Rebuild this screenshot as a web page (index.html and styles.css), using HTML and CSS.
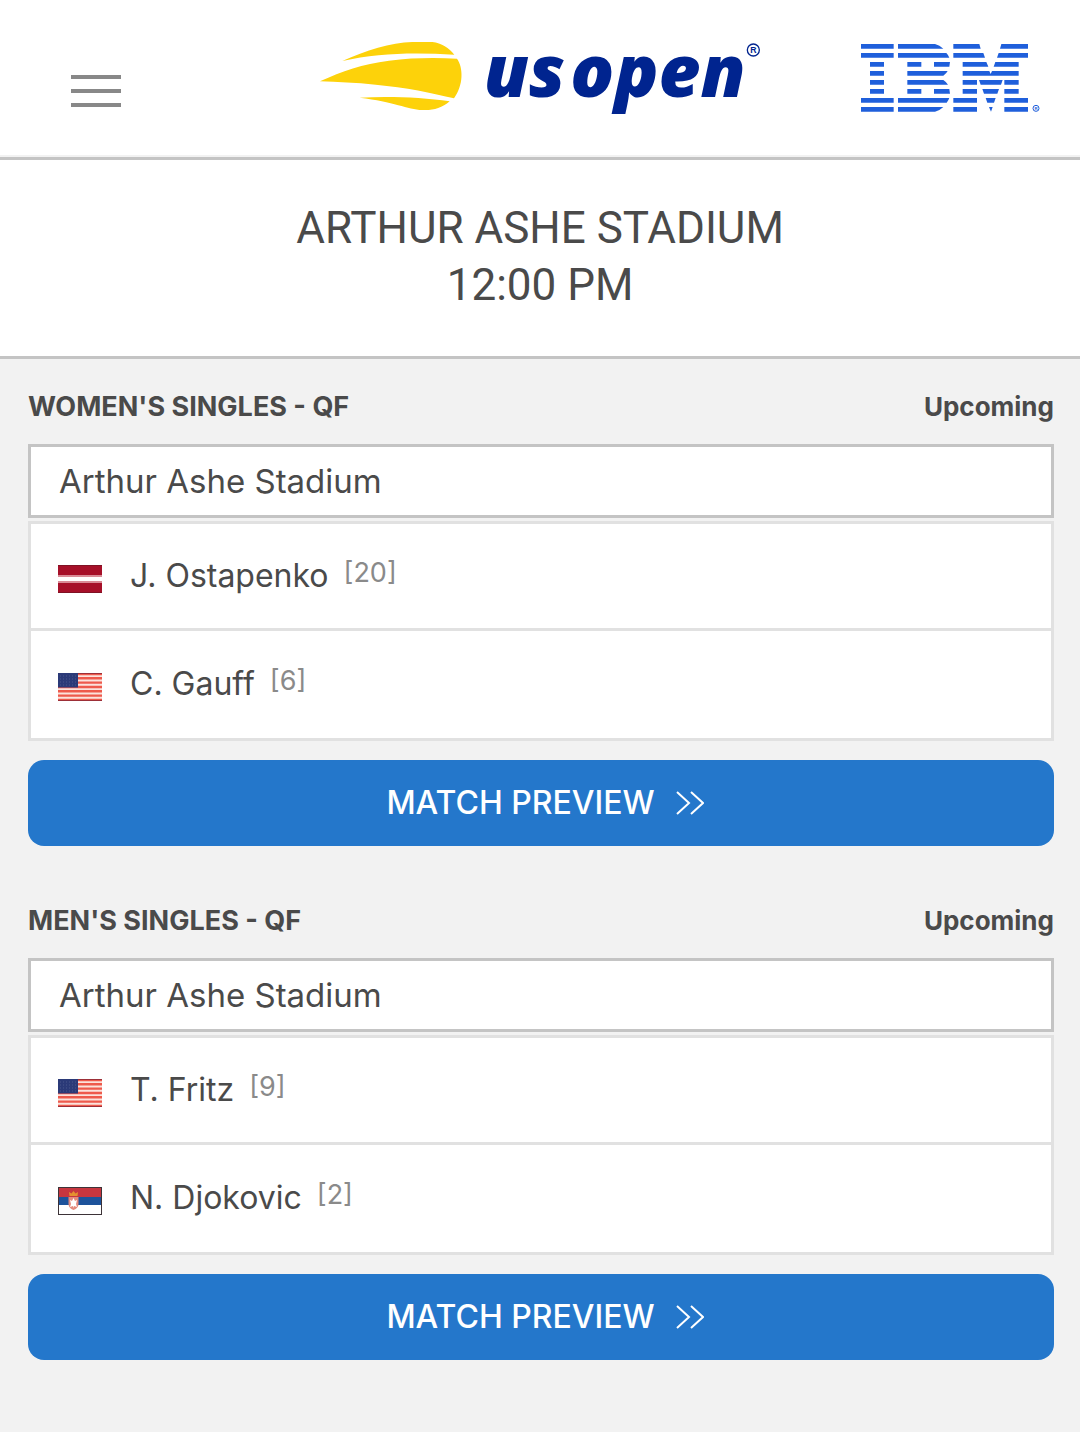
FILE: index.html
```
<!DOCTYPE html>
<html lang="en">
<head>
    <meta charset="UTF-8">
    <meta name="viewport" content="width=device-width, initial-scale=1.0">
    <title>US Open - Schedule</title>
    <link rel="stylesheet" href="styles.css">
</head>
<body>
    <!-- shared flags and icons -->
    <svg class="sprite" aria-hidden="true">
        <symbol id="flag-lat" viewBox="0 0 44 28">
            <rect width="44" height="28" fill="#a61029"/>
            <rect y="10" width="44" height="8" fill="#d98b96"/>
            <rect y="12" width="44" height="4" fill="#fff"/>
            <path d="M0 .5h44M0 27.5h44" stroke="#7f1224"/>
        </symbol>
        <symbol id="flag-usa" viewBox="0 0 44 28">
            <rect width="44" height="28" fill="#fbe3dc"/>
            <path d="M0 1h44M0 5.3h44M0 9.6h44M0 14h44M0 18.3h44M0 22.6h44M0 27h44" stroke="#ee5a4c" stroke-width="2.4"/>
            <path d="M0 .5h44M0 27.5h44" stroke="#9c2f38"/>
            <rect width="20" height="14.500" fill="#2b3a78"/>
            <path d="M2 3h17M2 6h17M2 9h17M2 12h17" stroke="#4a568c" stroke-dasharray="1 2"/>
        </symbol>
        <symbol id="flag-srb" viewBox="0 0 44 28">
            <rect width="44" height="28" fill="#fff"/>
            <rect width="44" height="10" fill="#c7363f"/>
            <rect y="10" width="44" height="8" fill="#1d539b"/>
            <path d="M10.500 10h10v7q0 4-5 6q-5-2-5-6z" fill="#e58a7c"/>
            <path d="M15.500 11l1.500 3 2-1-1 4 1 3-3-1-.5 2-.5-2-3 1 1-3-1-4 2 1z" fill="#fff"/>
            <path d="M11.500 9l-.5-4 2.500 1.500 2-2.500 2 2.500 2.500-1.500-.5 4z" fill="#e5912f"/>
            <rect x=".5" y=".5" width="43" height="27" fill="none" stroke="#3d3338"/>
        </symbol>
        <symbol id="chevrons" viewBox="0 0 28 24">
            <path d="M1 1l12 11L1 23M15 1l12 11-12 11" fill="none" stroke="#fff" stroke-width="2"/>
        </symbol>
    </svg>

    <header class="header">
        <button class="menu-btn" type="button" aria-label="Menu">
            <span></span>
            <span></span>
            <span></span>
        </button>
        <a class="logo" href="#" aria-label="US Open">
            <svg class="usopen-logo" viewBox="60 60 1326 228">
                <g fill="#fdd20a">
                    <path d="M130 123C200 92 275 68 340 66L400 66C428 69 450 84 466 104C350 97 235 98 130 123Z"/>
                    <path d="M63 184C130 153 190 132 270 122C340 113 410 113 474 116C493 143 494 195 465 235C400 219 320 202 230 194C170 188 115 186 63 184Z"/>
                    <path d="M182 233C270 228 370 232 452 244C428 265 400 272 370 270C325 268 285 245 182 233Z"/>
                </g>
                <g class="usopen-text">
                    <text x="554" y="232">us</text>
                    <text x="814" y="232">open</text>
                </g>
                <circle cx="1363" cy="90" r="18" fill="none" stroke="#00248f" stroke-width="4"/>
                <text class="usopen-reg" x="1363" y="99">R</text>
            </svg>
        </a>
        <a class="sponsor" href="#" aria-label="IBM">
            <svg class="ibm-logo" viewBox="63 72 537 204">
                <g fill="#1f5fdb">
                    <path d="M63 72h98v14h-98zM63 99h98v14h-98zM90 126h42v14h-42zM90 153h42v14h-42zM90 180h42v14h-42zM90 207h42v14h-42zM63 234h98v14h-98zM63 261h98v14h-98z"/>
                    <path d="M174 72h111q14 3 25 14h-136zM174 99h145q6 6 9 14h-154zM202 126h42v14h-42zM282 126h48l-2 14h-46zM202 153h121q-4 8-13 14h-108zM202 180h108q9 6 14 14h-122zM202 207h42v14h-42zM282 207h46l2 14h-48zM174 234h154q-3 8-8 14h-146zM174 261h136q-11 11-25 14h-111z"/>
                    <path d="M340 72h78l4 14h-82zM484 72h80v14h-84zM340 99h90l5 14h-95zM476 99h88v14h-93zM368 126h71l6 14h-77zM466 126h70v14h-75zM368 153h80l4 9 4-9h80v14h-168zM368 180h43v14h-43zM417 180h71l-5 14h-61zM493 180h43v14h-43zM368 207h43v14h-43zM427 207h50l-5 14h-40zM493 207h43v14h-43zM340 234h71v14h-71zM437 234h30l-5 14h-20zM493 234h71v14h-71zM340 261h71v14h-71zM447 261h11l-5 14zM493 261h71v14h-71z"/>
                </g>
                <circle cx="588" cy="265" r="9" fill="none" stroke="#1f5fdb" stroke-width="3"/>
                <text class="ibm-reg" x="588" y="270">R</text>
            </svg>
        </a>
    </header>

    <h1 class="court-title">ARTHUR ASHE STADIUM<br>12:00 PM</h1>

    <main class="matches">
        <section class="match">
            <div class="match-head">
                <h2>WOMEN'S SINGLES - QF</h2>
                <span>Upcoming</span>
            </div>
            <div class="court">Arthur Ashe Stadium</div>
            <ul class="players">
                <li>
                    <svg class="flag"><use href="#flag-lat"/></svg>
                    <span class="name">J. Ostapenko</span>
                    <span class="seed">[20]</span>
                </li>
                <li>
                    <svg class="flag"><use href="#flag-usa"/></svg>
                    <span class="name">C. Gauff</span>
                    <span class="seed">[6]</span>
                </li>
            </ul>
            <button class="preview-btn" type="button">
                MATCH PREVIEW
                <svg class="chevrons"><use href="#chevrons"/></svg>
            </button>
        </section>

        <section class="match">
            <div class="match-head">
                <h2>MEN'S SINGLES - QF</h2>
                <span>Upcoming</span>
            </div>
            <div class="court">Arthur Ashe Stadium</div>
            <ul class="players">
                <li>
                    <svg class="flag"><use href="#flag-usa"/></svg>
                    <span class="name">T. Fritz</span>
                    <span class="seed">[9]</span>
                </li>
                <li>
                    <svg class="flag"><use href="#flag-srb"/></svg>
                    <span class="name">N. Djokovic</span>
                    <span class="seed">[2]</span>
                </li>
            </ul>
            <button class="preview-btn" type="button">
                MATCH PREVIEW
                <svg class="chevrons"><use href="#chevrons"/></svg>
            </button>
        </section>
    </main>
</body>
</html>
```
FILE: styles.css
```
* {
    box-sizing: border-box;
}

body {
    margin: 0;
    background-color: #f2f2f2;
    color: #4a4a4a;
    font-family: Inter, Roboto, sans-serif;
}

.sprite {
    display: none;
}

.header {
    display: grid;
    grid-template-columns: 1fr auto 1fr;
    align-items: center;
    padding: 40px 40px 41px;
    background-color: #fff;
    border-bottom: 3px solid #c4c4c4;
    box-shadow: inset 0 -2px #f2f2f2;
}

.menu-btn {
    display: flex;
    flex-direction: column;
    align-self: end;
    gap: 10px;
    width: 50px;
    margin: 0 0 9px 31px;
    padding: 0;
    border: none;
    background: none;
}

.menu-btn span {
    width: 100%;
    height: 4px;
    background-color: #888;
}

.logo,
.sponsor {
    display: block;
}

.sponsor {
    justify-self: end;
}

.usopen-logo {
    display: block;
    width: 442px;
    height: 76px;
    overflow: visible;
}

.usopen-text {
    fill: #00248f;
    font-family: "Open Sans", sans-serif;
    font-size: 218px;
    font-style: italic;
    font-weight: 800;
}

.usopen-reg {
    fill: #00248f;
    font-family: "Liberation Sans", sans-serif;
    font-size: 26px;
    font-weight: bold;
    text-anchor: middle;
}

.ibm-logo {
    display: block;
    width: 179px;
    height: 68px;
    overflow: visible;
}

.ibm-reg {
    fill: #1f5fdb;
    font-family: "Liberation Sans", sans-serif;
    font-size: 13px;
    font-weight: bold;
    text-anchor: middle;
}

.court-title {
    margin: 0;
    padding: 40px 20px 42px;
    background-color: #fff;
    border-bottom: 3px solid #c4c4c4;
    font-family: Roboto, sans-serif;
    font-size: 44px;
    font-weight: 400;
    line-height: 57px;
    text-align: center;
}

.matches {
    padding: 28px 26px 72px 28px;
}

.match + .match {
    margin-top: 55px;
}

.match-head {
    display: flex;
    justify-content: space-between;
    align-items: center;
    margin-bottom: 17px;
    font-size: 26px;
    font-weight: 700;
    line-height: 40px;
}

.match-head h2 {
    margin: 0;
    font-size: 27px;
}

.court {
    padding: 14px 28px;
    background-color: #fff;
    border: 3px solid #c4c4c4;
    font-size: 33px;
    line-height: 40px;
}

.players {
    margin: 3px 0 19px;
    padding: 0;
    list-style: none;
    background-color: #fff;
    border: 3px solid #e1e1e1;
}

.players li {
    display: flex;
    align-items: center;
    height: 104px;
    padding: 0 27px;
}

.players li + li {
    height: 110px;
    padding-bottom: 2px;
    border-top: 3px solid #e1e1e1;
}

.flag {
    width: 44px;
    height: 28px;
    margin: 6px 28px 0 0;
}

.name {
    font-size: 32px;
    line-height: 40px;
}

.seed {
    margin: 0 0 6px 15px;
    color: #8a8a8a;
    font-size: 27px;
    line-height: 40px;
}

.preview-btn {
    display: flex;
    justify-content: center;
    align-items: center;
    gap: 21px;
    width: 100%;
    padding: 23px 20px 23px 28px;
    border: none;
    border-radius: 16px;
    background-color: #2477cb;
    color: #fff;
    font-family: inherit;
    font-size: 32px;
    font-weight: 500;
    line-height: 40px;
}

.chevrons {
    width: 28px;
    height: 24px;
}
```
